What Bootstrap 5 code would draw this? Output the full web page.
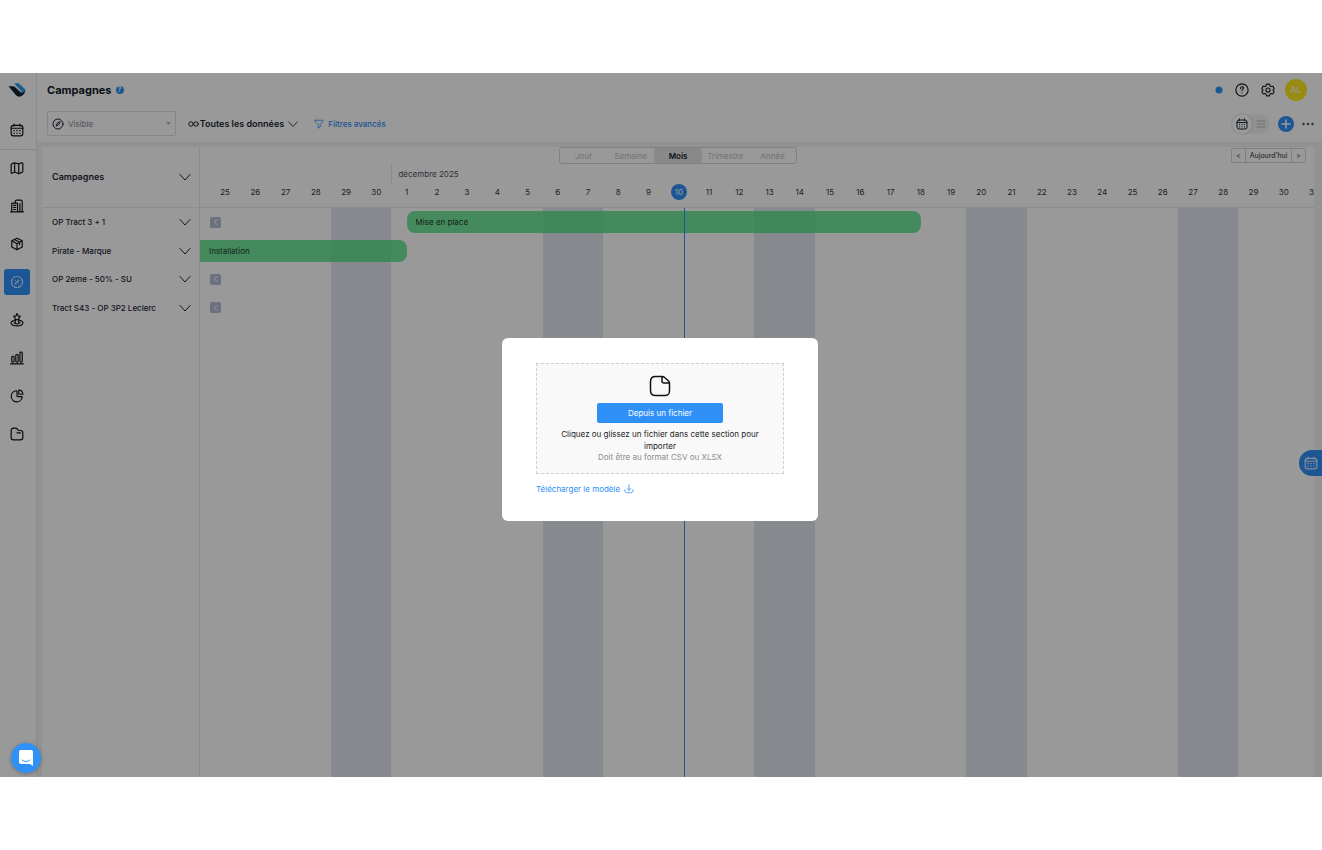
<!DOCTYPE html>
<html lang="fr">
<head>
<meta charset="utf-8">
<meta name="viewport" content="width=device-width, initial-scale=1">
<title>Campagnes</title>
<link href="https://cdn.jsdelivr.net/npm/bootstrap@5.3.0/dist/css/bootstrap.min.css" rel="stylesheet">
<style>
:root{--brand:#2f90f8;--rule:#e6ebf0;--gutter:#f3f4f5}
body{font-family:Inter,sans-serif;font-size:8px;line-height:12px;color:#1c2633;background:#fff;height:100vh;padding:73px 0}
svg{fill:none;stroke:currentColor;stroke-width:2;stroke-linecap:round;stroke-linejoin:round;display:block;flex:none}
svg.solid{stroke:none}
button,input,select{font:inherit}
.i14{width:14px;height:14px}.i12{width:12px;height:12px}.i10{width:10px;height:10px}
.app{overflow:hidden;min-height:560px}
.rail{width:37px;border-right:1px solid var(--rule)}
.rail-top,.rail-nav{padding-right:2px}
.rail a{color:#111;width:26px;height:26px;border-radius:3px;display:flex;align-items:center;justify-content:center}
.rail a.on{background:var(--brand);color:#dcecff}
.rail-top{height:77px;border-bottom:1px solid #dfe3e7;padding-top:9px;gap:19px}
.rail-nav{gap:12px;padding-top:5px}
.page-head{height:69px;padding:6px 8px 0 10px;gap:10px}
.page-title{font-size:11px;line-height:18px;font-weight:700;color:#111c2b}
.help-dot{width:8px;height:8px;font-size:7px;line-height:8px;font-weight:700;background:var(--brand);color:#fff}
.brand-link{color:var(--brand);text-decoration:none}
.view-box{width:129px;height:25px;border:1px solid #dde0e4;border-radius:2px;padding:0 4px}
.view-box select{appearance:none;border:0;background:none;color:#858b93;outline:0}
.data-set{font-size:9px;font-weight:600;color:#16202e;margin-left:12px}
.plain{border:0;background:none;padding:0;color:inherit;display:flex;align-items:center}
.tools{gap:8px;padding-right:7px;color:#1a1f26}
.tools .plain{width:18px;justify-content:center}
.tools .avatar{width:22px;height:22px;background:#ffe81e;color:#fff;font-size:9px}
.toggle{background:var(--gutter);border-radius:10px;width:38px;height:20px}
.toggle .plain{width:20px;height:20px;justify-content:center;border-radius:50%}
.toggle .on{background:#fff;box-shadow:0 0 2px #bbb}
.toggle .off{width:18px;color:#b4b8be}
.add{width:16px;height:16px;background:var(--brand);color:#fff;justify-content:center}
.board{background:var(--gutter);padding:5px 8px 0 5px}
.names{width:158px;border-right:1px solid var(--rule)}
.names-head{height:61px;border-bottom:1px solid var(--rule);padding:0 8px 0 10px;font-size:9px;font-weight:600}
.rows{height:114px;display:grid;grid-auto-rows:1fr}
.name-row{padding:0 8px 0 10px;font-weight:500}
.time-head{height:61px;border-bottom:1px solid var(--rule)}
.scale-row{padding-right:158px}
.scale{width:238px;height:17px;border:1px solid #d3d7dc;border-radius:3px;color:#bcc0c5}
.scale .plain{flex:1;justify-content:center;height:15px}
.scale .on{background:#e4e5e7;color:#16202e;font-weight:600;border-radius:2px}
.stepper{right:8px;top:1px;height:15px;border:1px solid #d3d7dc;border-radius:2px;font-size:7px}
.stepper .plain{height:13px;padding:0 4px}
.stepper .plain+.plain{border-left:1px solid #d3d7dc}
.days{display:grid;grid-template-columns:10px repeat(73,minmax(0,1fr))}
.day{grid-column-end:span 2;text-align:center;color:#30353c;line-height:16px}
.day:first-child{grid-column:2/span 2}
.day-cut{overflow:hidden;padding-left:10px;line-height:16px;color:#30353c}
.today{background:var(--brand);color:#fff;width:16px;height:16px;border-radius:50%;margin:auto}
.month{grid-column:14/-1;border-left:1px solid var(--rule);line-height:20px;padding-left:6px;color:#4d5359}
.rest{background:#dfe7ed}
.lanes{inset:0}
.now{border-left:1px solid var(--brand);margin-left:68%}
.task{height:22px;align-self:center;background:rgba(80,224,128,.8);color:#22392a;padding:0 9px;line-height:22px}
.tasks{position:relative}
.back{width:11px;height:11px;background:#b3bdd4;color:#fff;border-radius:2px;justify-content:center;align-self:center;grid-column:1/span 3;margin-left:10px;grid-row:1}
.cal-tab{right:0;top:377px;width:23px;height:26px;border-radius:13px 0 0 13px;background:var(--brand);color:#dcecff;padding-left:5px}
.shade{inset:0;background:rgba(0,0,0,.4);z-index:5;padding:9px 2px 0 0}
.dialog{width:316px;background:#fff;border-radius:6px;padding:25px 34px 26px}
.drop{border:1px dashed #cfcfcf;background:#f9f9f9;height:111px;padding:10px 20px 0}
.drop .btn{width:126px;height:20px;background:var(--brand);border:0;border-radius:2px;color:#fff;font-size:8px;line-height:20px;padding:0;margin:5px 0}
.drop .hint{color:#222}
.drop .note{color:#8c8c8c;line-height:11px}
.model{margin-top:9px}
.chat{left:11px;bottom:4px;width:30px;height:30px;background:var(--brand);color:#fff;z-index:6;justify-content:center;box-shadow:0 1px 4px rgba(0,0,0,.25)}
</style>
</head>
<body class="d-flex flex-column m-0">
<svg class="d-none">
<symbol id="chev" viewBox="0 0 12 12"><path d="M1 3.500l5 5.500 5-5.500" stroke-width="1"/></symbol>
<symbol id="cal" viewBox="0 0 24 24"><rect x="2" y="4" width="20" height="18" rx="4"/><path d="M2 9h20M7 2v3M17 2v3"/><path d="M7 13v.1M12 13v.1M17 13v.1M7 17.500v.1M12 17.500v.1M17 17.500v.1" stroke-width="2.500"/></symbol>
<symbol id="prev" viewBox="0 0 10 10"><path d="M6 2.500L3.500 5 6 7.500" stroke-width="1"/></symbol>
</svg>
<div class="app d-flex flex-fill position-relative">
  <aside class="rail d-flex flex-column flex-shrink-0">
    <div class="rail-top d-flex flex-column align-items-center">
      <svg class="solid" width="18" height="16" viewBox="0 0 18 16"><path d="M6.500 2C8 .6 10 .8 11.500 2l5 4.500c1 1 1 2 .3 3L15 11z" fill="#2f9df0"/><path d="M.5 4.200h4c1.200 0 2 .4 2.800 1.100l4.200 4c2 1.800 4 1.700 6-1-.3 2.500-1.800 4.500-4 5.700-2 1.100-4 .7-5.500-.7z" fill="#12263a"/></svg>
      <a href="#" aria-label="Calendrier"><svg class="i14"><use href="#cal"/></svg></a>
    </div>
    <nav class="rail-nav d-flex flex-column align-items-center">
      <a href="#" aria-label="Carte"><svg class="i14" viewBox="0 0 24 24"><path d="M4 4.500L8 3v16l-4.500 2C2.500 21 2 20.500 2 20V7c0-1.500.5-2 2-2.500zM8 3l7 2v17l-7-3M15 5l5.500-2c1 0 1.500.5 1.500 1.500V17c0 1.500-.5 2-1.500 2.500L15 22"/></svg></a>
      <a href="#" aria-label="Magasins"><svg class="i14" viewBox="0 0 24 24"><path d="M1 22h22M3 22V8c0-1 1-1 1-1h8c1 0 1 1 1 1v14M9 7V4c0-1 1-2 2-2h7c2 0 3 1 3 3v17M17 8v14M6 11h4M6 14.500h4M6 18h4"/></svg></a>
      <a href="#" aria-label="Produits"><svg class="i14" viewBox="0 0 24 24"><path d="M12 2l9 4.500v10.500l-9 5-9-5V6.500zM3 6.500l9 5 9-5M12 11.500V22M7.500 4.300l9 4.700v4"/></svg></a>
      <a href="#" class="on" aria-label="Campagnes"><svg class="i14" viewBox="0 0 24 24"><circle cx="12" cy="12" r="9.500" stroke-dasharray="5 2.460"/><path d="M9 15l6-6M9 9v.1M15 15v.1"/></svg></a>
      <a href="#" aria-label="Animations"><svg class="i14" viewBox="0 0 24 24"><path d="M12 1l2 4 4 .5-3 3 1 4.500-4-2-4 2 1-4.500-3-3 4-.5zM9 14v3M15 14v3M6 13c-7 2-5 9 6 9s13-7 6-9M7 17c2 2 8 2 10 0"/></svg></a>
      <a href="#" aria-label="Statistiques"><svg class="i14" viewBox="0 0 24 24"><path d="M1 22h22"/><rect x="3" y="9" width="4" height="10" rx="1.500"/><rect x="10" y="6" width="4" height="13" rx="1.500"/><rect x="17" y="2" width="4" height="17" rx="1.500"/></svg></a>
      <a href="#" aria-label="Rapports"><svg class="i14" viewBox="0 0 24 24"><path d="M11 3a9.500 9.500 0 1 0 10 11c0-1-1-1-1-1h-7c-1 0-1-1-1-1V4s0-1-1-1zM15 2c4 0 7 3 7 7h-6c-1 0-1-1-1-1z"/></svg></a>
      <a href="#" aria-label="Documents"><svg class="i14" viewBox="0 0 24 24"><path d="M6 2h4c1.500 0 2 1 3 2.500s1.500 1.500 3 1.500h2c3 0 4 2 4 4v8c0 2-2 4-4 4H6c-2 0-4-2-4-4V6c0-2 2-4 4-4zM12 10h6"/></svg></a>
    </nav>
  </aside>
  <main class="d-flex flex-column flex-fill overflow-hidden">
    <header class="page-head d-flex flex-column">
      <div class="d-flex align-items-center justify-content-between">
        <div class="d-flex align-items-center gap-1"><h1 class="page-title m-0">Campagnes</h1><span class="help-dot rounded-circle text-center">?</span></div>
        <div class="tools d-flex align-items-center">
          <svg width="12" height="8" viewBox="0 0 12 8" class="solid"><circle cx="6" cy="4" r="3.500" fill="#2f90f8"/></svg>
          <button class="plain" aria-label="Aide"><svg class="i14" viewBox="0 0 24 24"><circle cx="12" cy="12" r="10.500"/><path d="M9.500 9.500c0-4 5-4 5-1 0 2-2.500 2-2.500 4.500M12 17v.1"/></svg></button>
          <button class="plain" aria-label="Réglages"><svg class="i14" viewBox="0 0 24 24"><path d="M9.500 2h5l1 3 2 1 3-.5 2 4-2 2.500 2 2.500-2 4-3-.5-2 1-1 3h-5l-1-3-2-1-3 .5-2-4L3.500 12l-2-2.500 2-4 3 .5 2-1z"/><circle cx="12" cy="12" r="3.500"/></svg></button>
          <button class="plain avatar rounded-circle">AL</button>
        </div>
      </div>
      <div class="d-flex align-items-center justify-content-between">
        <div class="d-flex align-items-center">
          <label class="view-box d-flex align-items-center"><svg class="i12" viewBox="0 0 24 24"><circle cx="12" cy="12" r="10"/><path d="M16 8l-2.500 5.500L8 16l2.500-5.500z"/></svg>
            <select class="flex-fill ms-1 ps-0" aria-label="Vue"><option>Visible</option></select>
            <svg class="solid" width="5" height="4" viewBox="0 0 5 4"><path d="M0 0h5L2.500 3z" fill="#b0b3b8"/></svg></label>
          <button class="plain data-set"><svg width="11" height="8" viewBox="0 0 22 16"><circle cx="6" cy="8" r="4.500"/><circle cx="16" cy="8" r="4.500"/></svg><span class="ms-0 ps-0">&#8202;Toutes les données</span><svg class="i10 ms-1"><use href="#chev"/></svg></button>
          <a href="#" class="brand-link d-flex align-items-center ms-3 fw-medium"><svg class="i10 me-1" viewBox="0 0 24 24"><path d="M3 3h18c1 0 1 2 0 3l-6 7v6l-5 3v-9L3 6C2 5 2 3 3 3z"/></svg>Filtres avancés</a>
        </div>
        <div class="d-flex align-items-center gap-2">
          <div class="toggle d-flex"><button class="plain on" aria-label="Vue calendrier"><svg class="i12"><use href="#cal"/></svg></button><button class="plain off" aria-label="Vue liste"><svg class="i10" viewBox="0 0 10 10"><path d="M1 2h8M1 5h8M1 8h8" stroke-width="1"/></svg></button></div>
          <button class="plain add rounded-circle" aria-label="Ajouter"><svg class="i10" viewBox="0 0 10 10"><path d="M5 1v8M1 5h8" stroke-width="1.500"/></svg></button>
          <button class="plain" aria-label="Plus d’actions"><svg class="solid" width="12" height="4" viewBox="0 0 12 4"><g fill="#35506e"><circle cx="1.500" cy="2" r="1.200"/><circle cx="6" cy="2" r="1.200"/><circle cx="10.500" cy="2" r="1.200"/></g></svg></button>
        </div>
      </div>
    </header>
    <section class="board d-flex flex-fill">
      <div class="names bg-white flex-shrink-0">
        <div class="names-head d-flex align-items-center justify-content-between"><span>Campagnes</span><svg class="i12"><use href="#chev"/></svg></div>
        <div class="rows">
          <div class="name-row d-flex align-items-center justify-content-between"><span>OP Tract 3 + 1</span><svg class="i12"><use href="#chev"/></svg></div>
          <div class="name-row d-flex align-items-center justify-content-between"><span>Pirate - Marque</span><svg class="i12"><use href="#chev"/></svg></div>
          <div class="name-row d-flex align-items-center justify-content-between"><span>OP 2eme - 50% - SU</span><svg class="i12"><use href="#chev"/></svg></div>
          <div class="name-row d-flex align-items-center justify-content-between"><span>Tract S43 - OP 3P2 Leclerc</span><svg class="i12"><use href="#chev"/></svg></div>
        </div>
      </div>
      <div class="bg-white flex-fill d-flex flex-column overflow-hidden">
        <div class="time-head position-relative d-flex flex-column">
          <div class="scale-row d-flex justify-content-center"><div class="scale d-flex"><button class="plain">Jour</button><button class="plain">Semaine</button><button class="plain on">Mois</button><button class="plain">Trimestre</button><button class="plain">Année</button></div></div>
          <div class="stepper d-flex position-absolute"><button class="plain">&lt;</button><button class="plain">Aujourd’hui</button><button class="plain">&gt;</button></div>
          <div class="days"><div class="month">décembre 2025</div></div>
          <div class="days flex-fill" id="dates"></div>
        </div>
        <div class="position-relative flex-fill">
          <div class="lanes days position-absolute" id="lanes"></div>
          <div class="rows tasks">
            <div class="days"><button class="plain back" aria-label="Précédent"><svg class="i10"><use href="#prev"/></svg></button><div class="task rounded-3" style="grid-column:15/49;grid-row:1">Mise en place</div></div>
            <div class="days"><div class="task rounded-end-3" style="grid-column:1/15">Installation</div></div>
            <div class="days"><button class="plain back" aria-label="Précédent"><svg class="i10"><use href="#prev"/></svg></button></div>
            <div class="days"><button class="plain back" aria-label="Précédent"><svg class="i10"><use href="#prev"/></svg></button></div>
          </div>
          <div class="lanes days position-absolute pe-none" id="marker"></div>
        </div>
      </div>
    </section>
  </main>
  <button class="plain cal-tab position-absolute" aria-label="Ouvrir le calendrier"><svg class="i14"><use href="#cal"/></svg></button>
  <div class="shade position-absolute d-flex align-items-center justify-content-center">
    <div class="dialog" role="dialog" aria-label="Importer un fichier">
      <div class="drop d-flex flex-column align-items-center text-center">
        <svg width="24" height="24" viewBox="0 0 24 24" color="#111"><path d="M7.500 2.500H14c1 0 2 .3 2.700 1L20.500 7c.8.700 1 1.600 1 2.500v7c0 4-1.500 5-5 5h-9c-3.500 0-5-1.500-5-5v-9c0-3.500 1.500-5 5-5zM14 2.500V7c0 1.500.5 2 2 2h5.500" stroke-width="1.500"/></svg>
        <button class="btn">Depuis un fichier</button>
        <div class="hint">Cliquez ou glissez un fichier dans cette section pour importer</div>
        <div class="note">Doit être au format CSV ou XLSX</div>
      </div>
      <a href="#" class="brand-link model d-inline-flex align-items-center">Télécharger le modèle<svg class="i10 ms-1" viewBox="0 0 24 24"><path d="M12 2v13M8 11l4 4 4-4M2 14c0 5 2 7 6 7h8c4 0 6-2 6-7"/></svg></a>
    </div>
  </div>
  <button class="plain chat rounded-circle position-absolute" aria-label="Messagerie"><svg class="solid" width="14" height="16" viewBox="0 0 14 16"><path d="M2 0h10c1.200 0 2 .8 2 2v14l-3-2H2c-1.200 0-2-.8-2-2V2C0 .8.800 0 2 0z" fill="#fff"/><path d="M3 10c2.500 2 5.500 2 8 0" stroke="#2f90f8" stroke-width="1"/></svg></button>
</div>
<script src="https://cdn.jsdelivr.net/npm/bootstrap@5.3.0/dist/js/bootstrap.bundle.min.js"></script>
<script>
const dates = document.getElementById('dates'), lanes = document.getElementById('lanes'), marker = document.getElementById('marker');
for (let i = 0; i < 36; i++) {
  const d = new Date(2025, 10, 25 + i);
  const today = d.getMonth() === 11 && d.getDate() === 10;
  dates.insertAdjacentHTML('beforeend', `<div class="day">${today ? `<div class="today">${d.getDate()}</div>` : d.getDate()}</div>`);
  const col = 2 + 2 * i;
  if (d.getDay() % 6 === 0) lanes.insertAdjacentHTML('beforeend', `<div class="rest" style="grid-column:${col}/span 2;grid-row:1"></div>`);
  if (today) marker.insertAdjacentHTML('beforeend', `<div style="grid-column:${col}/span 2;grid-row:1"><div class="now h-100"></div></div>`);
}
dates.insertAdjacentHTML('beforeend', '<div class="day-cut">31</div>');
</script>
</body>
</html>
